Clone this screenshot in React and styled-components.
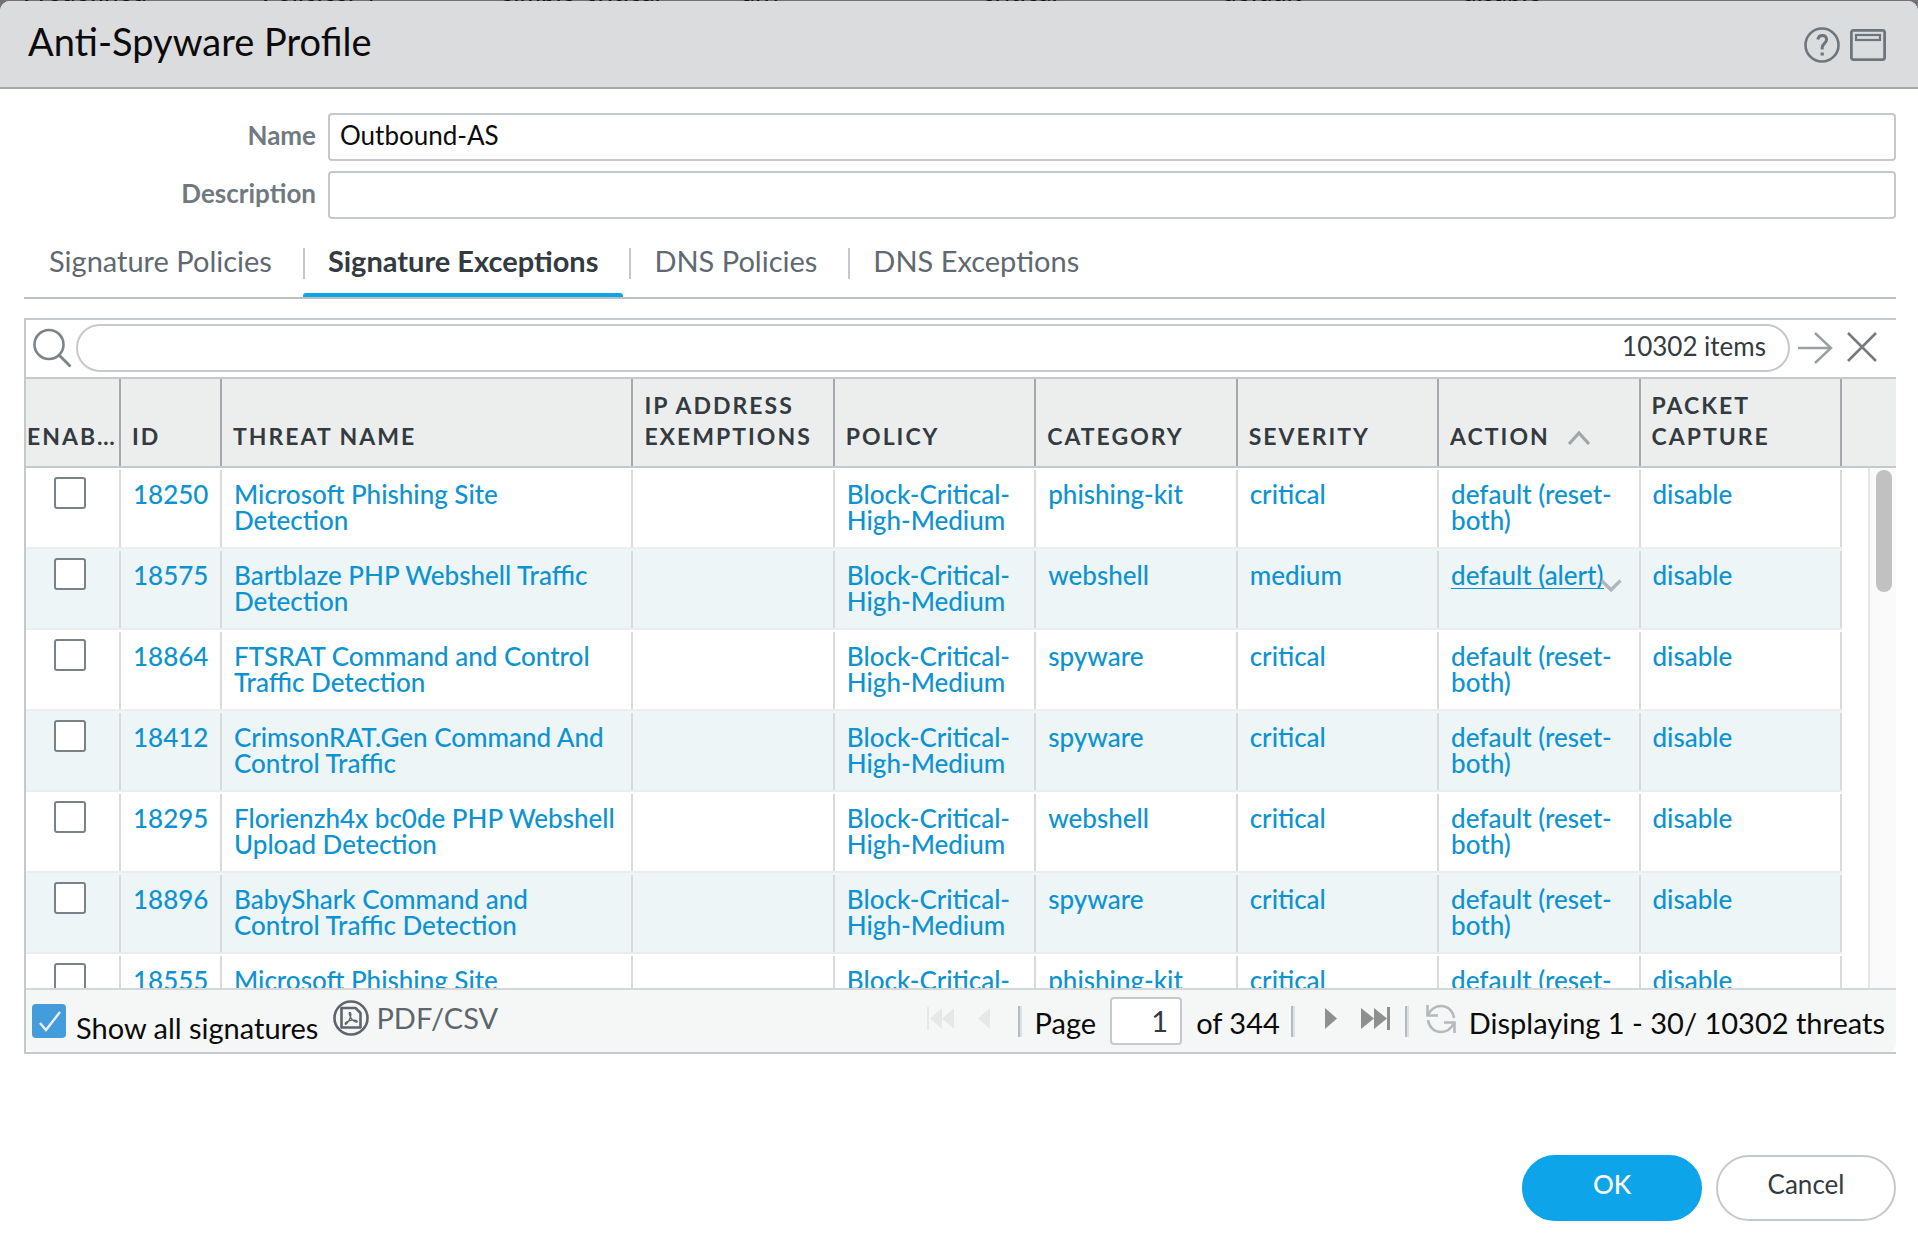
import React from "react";
import styled, { createGlobalStyle, css } from "styled-components";

const GlobalStyle = createGlobalStyle`
  *, *::before, *::after { box-sizing: border-box; }
  html, body { margin: 0; background: #fff; }
  body, input, button { font-family: Lato, "Open Sans", sans-serif; }
`;

const Screen = styled.div`
  display: flex;
  flex-direction: column;
  height: 100vh;
  min-height: 900px;
  background: #737175;
`;

const Backdrop = styled.div`
  display: grid;
  grid-template-columns: 239px 240px 240px 240px 240px 240px 1fr;
  align-content: end;
  flex: none;
  height: 1px;
  padding-left: 23px;
  overflow: hidden;
  font-size: 26px;
  line-height: 20px;
  color: #111;
`;

const Dialog = styled.section`
  display: flex;
  flex: 1;
  flex-direction: column;
  min-height: 0;
  overflow: hidden;
  background: #fff;
  border-radius: 10px 10px 0 0;
`;

const TitleBar = styled.header`
  display: flex;
  align-items: center;
  justify-content: space-between;
  height: 88px;
  flex: none;
  padding: 0 32px 7px 28px;
  background: #dbdcde;
  border-bottom: 2px solid #a1a7ab;
`;

const Title = styled.h1`
  margin: 0;
  font-size: 38px;
  font-weight: 400;
  line-height: 46px;
  color: #0b0b0b;
`;

const Tools = styled.div`
  display: flex;
  align-items: center;
  gap: 10px;
  padding-top: 8px;
`;

const IconButton = styled.button`
  display: inline-flex;
  flex: none;
  padding: 0;
  border: 0;
  background: none;
  color: ${(p) => p.$color || "#6f767b"};
  cursor: pointer;
`;

const Body = styled.div`
  display: flex;
  flex: 1;
  flex-direction: column;
  min-height: 0;
  padding: 24px 22px 33px 24px;
`;

const Fields = styled.div`
  display: grid;
  grid-template-columns: 292px 1fr;
  column-gap: 12px;
  row-gap: 10px;
`;

const FieldLabel = styled.label`
  justify-self: end;
  font-size: 26px;
  font-weight: 700;
  line-height: 44px;
  color: #707980;
`;

const TextBox = styled.input`
  width: 100%;
  height: 48px;
  padding: 0 10px 4px;
  border: 2px solid #c5c9cd;
  border-radius: 4px;
  background: #fff;
  font-size: 26px;
  color: #0b0b0b;
  outline: none;
`;

const Tabs = styled.nav`
  display: flex;
  flex: none;
  height: 80px;
  padding-top: 24px;
  border-bottom: 2px solid #bcc0c3;
`;

const Tab = styled.button`
  position: relative;
  display: flex;
  padding: 0 31px 0 25px;
  border: 0;
  background: none;
  font-size: 29px;
  font-weight: ${(p) => (p.$active ? 700 : 400)};
  line-height: 36px;
  color: ${(p) => (p.$active ? "#333a40" : "#5f6972")};
  cursor: pointer;

  &:not(:first-child)::before {
    content: "";
    position: absolute;
    left: 0;
    top: 5px;
    width: 2px;
    height: 31px;
    background: #c5c9cd;
  }

  ${(p) =>
    p.$active &&
    css`
      &::after {
        content: "";
        position: absolute;
        left: 0;
        right: 6px;
        bottom: 0;
        height: 4px;
        background: #0da4e9;
        border-radius: 3px 3px 0 0;
      }
    `}
`;

const Grid = styled.section`
  display: flex;
  flex: 1;
  flex-direction: column;
  min-height: 0;
  margin-top: 19px;
  border: 2px solid #c5c9cd;
  border-right: 0;
`;

const SearchBar = styled.div`
  display: flex;
  align-items: center;
  flex: none;
  height: 59px;
  padding: 0 18px 2px 7px;
  border-bottom: 2px solid #c5c9cd;
`;

const SearchField = styled.div`
  display: flex;
  flex: 1;
  align-items: center;
  height: 48px;
  margin: 0 7px 0 4px;
  padding: 0 22px 4px;
  border: 2px solid #c5c9cd;
  border-radius: 24px;
  font-size: 26px;
  color: #333a40;
`;

const SearchInput = styled.input`
  flex: 1;
  min-width: 0;
  border: 0;
  background: none;
  font-size: 26px;
  outline: none;
`;

const SearchActions = styled.div`
  display: flex;
  align-items: center;
  gap: 13px;
`;

const TableArea = styled.div`
  position: relative;
  flex: 1;
  min-height: 0;
`;

const Scroller = styled.div`
  height: 100%;
  overflow-y: auto;
  scrollbar-width: none;
`;

const Table = styled.table`
  width: 100%;
  table-layout: fixed;
  border-collapse: separate;
  border-spacing: 0;
`;

const Col = styled.col`
  width: ${(p) => p.$width};
`;

const HeadCell = styled.th`
  position: sticky;
  top: 0;
  z-index: 1;
  height: 89px;
  padding: 0 0 14px ${(p) => (p.$tight ? "1px" : "11px")};
  border-bottom: 2px solid #c5c9cd;
  background: #eceeee;
  ${(p) => !p.$last && css`background: linear-gradient(#a3a8ac, #a3a8ac) right top / 2px 100% no-repeat #eceeee;`}
  text-align: left;
  vertical-align: bottom;
  white-space: pre-line;
  font-size: 23px;
  font-weight: 700;
  line-height: 31px;
  letter-spacing: 2px;
  color: #333a40;

  svg { margin-left: 17px; }
`;

const Cell = styled.td`
  height: 81px;
  padding: 13px 17px 0 12px;
  border-bottom: 2px solid #ebedee;
  background: linear-gradient(#d8dbdd, #d8dbdd) right 0 top 2px / 2px 100% no-repeat
    ${(p) => (p.$striped ? "#edf5f7" : "#fff")};
  vertical-align: top;
  font-size: 26px;
  font-weight: 500;
  line-height: 26px;
  color: #0d93d2;
`;

const CheckCell = styled(Cell)`
  padding: 9px 7px 0 0;
  text-align: center;
`;

const EndCell = styled.td`
  background: #fff;
`;

const CellLink = styled.a`
  color: inherit;
  text-decoration: none;
`;

const ActionMenu = styled.span`
  position: relative;
  display: inline-block;
  border-bottom: 1px solid #0d93d2;
  vertical-align: top;

  svg {
    position: absolute;
    left: 100%;
    bottom: -4px;
    margin-left: -4px;
  }
`;

const RowCheck = styled.input`
  appearance: none;
  width: 32px;
  height: 32px;
  margin: 0;
  border: 2px solid #7b8287;
  border-radius: 3px;
  background: #fff;
`;

const ScrollTrack = styled.div`
  position: absolute;
  top: 89px;
  right: 0;
  bottom: 0;
  width: 28px;
  padding: 2px 4px 0 6px;
  border-left: 2px solid #e6e6e6;
  background: #fafafa;
`;

const ScrollThumb = styled.div`
  height: 122px;
  border-radius: 8px;
  background: #c1c1c1;
`;

const Footer = styled.footer`
  display: flex;
  flex: none;
  align-items: center;
  justify-content: space-between;
  height: 64px;
  padding: 0 11px 0 6px;
  border-top: 2px solid #d4d7d9;
  border-radius: 0 0 8px 8px;
  background: #f5f7f6;
  font-size: 29px;
  line-height: 34px;
  color: #0b0b0b;
`;

const FooterGroup = styled.div`
  display: flex;
  align-items: center;
`;

const ShowAll = styled.label`
  display: flex;
  align-items: center;
  gap: 10px;
`;

const ShowAllText = styled.span`
  padding-top: 14px;
`;

const ShowAllBox = styled.span`
  display: grid;

  > * { grid-area: 1 / 1; }
  svg { pointer-events: none; }
`;

const BlueCheck = styled.input`
  appearance: none;
  width: 34px;
  height: 34px;
  margin: 0;
  border-radius: 4px;
  background: #449cdb;
`;

const ExportButton = styled.button`
  display: flex;
  align-items: center;
  gap: 7px;
  margin-left: 15px;
  padding: 0 0 6px;
  border: 0;
  background: none;
  font-size: 29px;
  line-height: 34px;
  color: #5d666d;
  cursor: pointer;
`;

const PagerText = styled.span`
  padding-top: 4px;
  white-space: nowrap;
`;

const PagerLabel = styled.label`
  padding-top: 4px;
`;

const PageInput = styled.input`
  width: 72px;
  height: 48px;
  margin: 0 14px;
  padding: 0 12px 2px;
  border: 2px solid #c5c9cd;
  border-radius: 4px;
  background: #fff;
  text-align: right;
  font-size: 29px;
  color: #333a40;
`;

const Divider = styled.span`
  width: 4px;
  height: 31px;
  margin: 0 ${(p) => p.$after} 0 ${(p) => p.$before};
  border-left: 2px solid #b5babf;
  background: #dbe1e5;
`;

const PagerButton = styled(IconButton)`
  margin: 0 ${(p) => p.$after || "0"} 5px 0;
`;

const Actions = styled.div`
  display: flex;
  flex: none;
  justify-content: flex-end;
  gap: 14px;
  margin-top: 101px;
`;

const ActionButton = styled.button`
  width: 180px;
  height: 66px;
  padding: 0 0 8px;
  border: 2px solid ${(p) => (p.$primary ? "#0da4e9" : "#c5c8cd")};
  border-radius: 33px;
  background: ${(p) => (p.$primary ? "#0da4e9" : "#fff")};
  font-size: 26px;
  font-weight: ${(p) => (p.$primary ? 500 : 400)};
  color: ${(p) => (p.$primary ? "#fff" : "#333a40")};
  cursor: pointer;
`;

const HelpIcon = () => (
  <svg width="36" height="36" viewBox="0 0 36 36" fill="none" stroke="currentColor">
    <circle cx="18" cy="18" r="16.5" strokeWidth="2.6" />
    <path d="M13.800 12.500c.6-3 2.300-4 4.400-4 2.700 0 4.400 1.700 4.400 4.100 0 3.600-4.400 4-4.400 8v2" strokeWidth="3" />
    <path d="M18.200 25.500v3" strokeWidth="3.200" />
  </svg>
);

const WindowIcon = () => (
  <svg width="36" height="32" viewBox="0 0 36 32" fill="none" stroke="currentColor" strokeWidth="2.800">
    <rect x="1.400" y="1.400" width="33.200" height="29.200" rx="2" />
    <rect x="6" y="6" width="24" height="5" strokeWidth="2.200" />
  </svg>
);

const SearchIcon = () => (
  <svg width="39" height="40" viewBox="0 0 39 40" fill="none" stroke="#7d8387" strokeWidth="2.600">
    <circle cx="16" cy="16.500" r="14.500" />
    <path d="M26.500 27.500l11 11" strokeWidth="2.800" />
  </svg>
);

const ArrowIcon = () => (
  <svg width="36" height="34" viewBox="0 0 36 34" fill="none" stroke="currentColor" strokeWidth="2.400">
    <path d="M1 17h33M18 2l16 15-16 15" />
  </svg>
);

const ClearIcon = () => (
  <svg width="32" height="32" viewBox="0 0 32 32" fill="none" stroke="currentColor" strokeWidth="2.600">
    <path d="M2 1l28 28M30 1L2 29" />
  </svg>
);

const SortIcon = () => (
  <svg width="24" height="14" viewBox="0 0 24 14" fill="none" stroke="#a3a6a8" strokeWidth="3.200">
    <path d="M2 13L12 2l10 11" />
  </svg>
);

const CaretIcon = () => (
  <svg width="22" height="13" viewBox="0 0 22 13" fill="none" stroke="#b0b5b7" strokeWidth="3.200">
    <path d="M1.500 1.500L11 11l9.500-9.500" />
  </svg>
);

const CheckIcon = () => (
  <svg width="34" height="34" viewBox="0 0 34 34" fill="none" stroke="#e6f2fb" strokeWidth="2.400">
    <path d="M8 19l6 7L28 8" />
  </svg>
);

const PdfIcon = () => (
  <svg width="36" height="36" viewBox="0 0 36 36" fill="none" stroke="#5f656a">
    <circle cx="18" cy="18" r="16.500" strokeWidth="2.600" />
    <path d="M8.500 8h14l5 5v14.500h-19z" strokeWidth="2.600" strokeLinejoin="round" />
    <path d="M16.500 12.500c2.200-.5 1.500 4-.3 7.500-1.500 3-3.500 5-4 4-.6-1.500 4-3.600 7-3.800 3-.2 5.300.4 5 1.500-.5 1.300-4.200-.6-6-3.400-1.400-2-2.500-5.400-1.700-5.800z" strokeWidth="1.300" />
  </svg>
);

const FirstIcon = () => (
  <svg width="27" height="23" viewBox="0 0 27 23" fill="currentColor">
    <path d="M0 0h2v23H0zM15 1v21L3 11.500zM27 1v21L15 11.500z" />
  </svg>
);

const PrevIcon = () => (
  <svg width="12" height="21" viewBox="0 0 12 21" fill="currentColor">
    <path d="M12 0v21L0 10.500z" />
  </svg>
);

const NextIcon = () => (
  <svg width="12" height="21" viewBox="0 0 12 21" fill="currentColor">
    <path d="M0 0v21l12-10.500z" />
  </svg>
);

const LastIcon = () => (
  <svg width="29" height="23" viewBox="0 0 29 23" fill="currentColor">
    <path d="M26 0h3v23h-3zM0 1v21l13-10.500zM13 1v21l13-10.500z" />
  </svg>
);

const RefreshIcon = () => (
  <svg width="30" height="30" viewBox="0 0 30 30" fill="none" stroke="currentColor" strokeWidth="2.600">
    <path d="M2 11C5 5 9 2 15 2c7 0 12 5 13 12M28 19c-3 6-7 9-13 9C8 28 3 23 2 16" />
    <path d="M1.500 1v10.500H12M28.500 29V18.500H18" />
  </svg>
);

const backdropCells = ["Predefined", "Policies: 4", "simple-critical", "any", "critical", "default", "disable"];

const columns = [
  { label: "ENAB…", width: "95px", tight: true },
  { label: "ID", width: "101px" },
  { label: "THREAT NAME", width: "22%" },
  { label: "IP ADDRESS\nEXEMPTIONS" },
  { label: "POLICY" },
  { label: "CATEGORY" },
  { label: "SEVERITY" },
  { label: "ACTION", sorted: true },
  { label: "PACKET\nCAPTURE" },
];

const threats = [
  { id: "18250", name: "Microsoft Phishing Site Detection", category: "phishing-kit", severity: "critical", action: "default (reset-both)" },
  { id: "18575", name: "Bartblaze PHP Webshell Traffic Detection", category: "webshell", severity: "medium", action: "default (alert)", open: true },
  { id: "18864", name: "FTSRAT Command and Control Traffic Detection", category: "spyware", severity: "critical", action: "default (reset-both)" },
  { id: "18412", name: "CrimsonRAT.Gen Command And Control Traffic", category: "spyware", severity: "critical", action: "default (reset-both)" },
  { id: "18295", name: "Florienzh4x bc0de PHP Webshell Upload Detection", category: "webshell", severity: "critical", action: "default (reset-both)" },
  { id: "18896", name: "BabyShark Command and Control Traffic Detection", category: "spyware", severity: "critical", action: "default (reset-both)" },
  { id: "18555", name: "Microsoft Phishing Site Detection", category: "phishing-kit", severity: "critical", action: "default (reset-both)" },
];

const tabs = ["Signature Policies", "Signature Exceptions", "DNS Policies", "DNS Exceptions"];

function ThreatRow({ threat, striped }) {
  const link = (text) => <CellLink href="#threat">{text}</CellLink>;
  return (
    <tr>
      <CheckCell $striped={striped}>
        <RowCheck type="checkbox" aria-label={`Enable ${threat.id}`} />
      </CheckCell>
      <Cell $striped={striped}>{link(threat.id)}</Cell>
      <Cell $striped={striped}>{link(threat.name)}</Cell>
      <Cell $striped={striped} />
      <Cell $striped={striped}>{link("Block-Critical-High-Medium")}</Cell>
      <Cell $striped={striped}>{link(threat.category)}</Cell>
      <Cell $striped={striped}>{link(threat.severity)}</Cell>
      <Cell $striped={striped}>
        {threat.open ? (
          <ActionMenu>
            {link(threat.action)}
            <CaretIcon />
          </ActionMenu>
        ) : (
          link(threat.action)
        )}
      </Cell>
      <Cell $striped={striped}>{link("disable")}</Cell>
      <EndCell />
    </tr>
  );
}

export default function App() {
  return (
    <Screen>
      <GlobalStyle />
      <Backdrop aria-hidden="true">
        {backdropCells.map((text) => <span key={text}>{text}</span>)}
      </Backdrop>
      <Dialog role="dialog" aria-labelledby="title">
        <TitleBar>
          <Title id="title">Anti-Spyware Profile</Title>
          <Tools>
            <IconButton aria-label="Help"><HelpIcon /></IconButton>
            <IconButton aria-label="Maximize"><WindowIcon /></IconButton>
          </Tools>
        </TitleBar>
        <Body>
          <Fields>
            <FieldLabel htmlFor="name">Name</FieldLabel>
            <TextBox id="name" defaultValue="Outbound-AS" />
            <FieldLabel htmlFor="description">Description</FieldLabel>
            <TextBox id="description" />
          </Fields>
          <Tabs>
            {tabs.map((tab) => (
              <Tab key={tab} $active={tab === "Signature Exceptions"}>{tab}</Tab>
            ))}
          </Tabs>
          <Grid>
            <SearchBar>
              <SearchIcon />
              <SearchField>
                <SearchInput aria-label="Search threats" />
                <span>10302 items</span>
              </SearchField>
              <SearchActions>
                <IconButton aria-label="Apply filter" $color="#9a9fa2"><ArrowIcon /></IconButton>
                <IconButton aria-label="Clear filter" $color="#777b7e"><ClearIcon /></IconButton>
              </SearchActions>
            </SearchBar>
            <TableArea>
              <Scroller>
                <Table>
                  <colgroup>
                    {columns.map((c) => <Col key={c.label} $width={c.width || "auto"} />)}
                    <Col $width="54px" />
                  </colgroup>
                  <thead>
                    <tr>
                      {columns.map((c) => (
                        <HeadCell key={c.label} scope="col" $tight={c.tight}>
                          {c.label}
                          {c.sorted && <SortIcon />}
                        </HeadCell>
                      ))}
                      <HeadCell $last />
                    </tr>
                  </thead>
                  <tbody>
                    {threats.map((t, i) => <ThreatRow key={t.id} threat={t} striped={i % 2 === 1} />)}
                  </tbody>
                </Table>
              </Scroller>
              <ScrollTrack><ScrollThumb /></ScrollTrack>
            </TableArea>
            <Footer>
              <FooterGroup>
                <ShowAll>
                  <ShowAllBox>
                    <BlueCheck type="checkbox" defaultChecked />
                    <CheckIcon />
                  </ShowAllBox>
                  <ShowAllText>Show all signatures</ShowAllText>
                </ShowAll>
                <ExportButton><PdfIcon />PDF/CSV</ExportButton>
              </FooterGroup>
              <FooterGroup>
                <PagerButton aria-label="First page" $color="#e6e8e8" $after="24px"><FirstIcon /></PagerButton>
                <PagerButton aria-label="Previous page" $color="#e6e8e8"><PrevIcon /></PagerButton>
                <Divider $before="28px" $after="13px" />
                <PagerLabel htmlFor="page">Page</PagerLabel>
                <PageInput id="page" defaultValue="1" />
                <PagerText>of 344</PagerText>
                <Divider $before="11px" $after="30px" />
                <PagerButton aria-label="Next page" $color="#8f8f8f" $after="24px"><NextIcon /></PagerButton>
                <PagerButton aria-label="Last page" $color="#8f8f8f"><LastIcon /></PagerButton>
                <Divider $before="15px" $after="17px" />
                <PagerButton aria-label="Refresh" $color="#b5b9bb" $after="13px"><RefreshIcon /></PagerButton>
                <PagerText>Displaying 1 - 30/ 10302 threats</PagerText>
              </FooterGroup>
            </Footer>
          </Grid>
          <Actions>
            <ActionButton $primary>OK</ActionButton>
            <ActionButton>Cancel</ActionButton>
          </Actions>
        </Body>
      </Dialog>
    </Screen>
  );
}
